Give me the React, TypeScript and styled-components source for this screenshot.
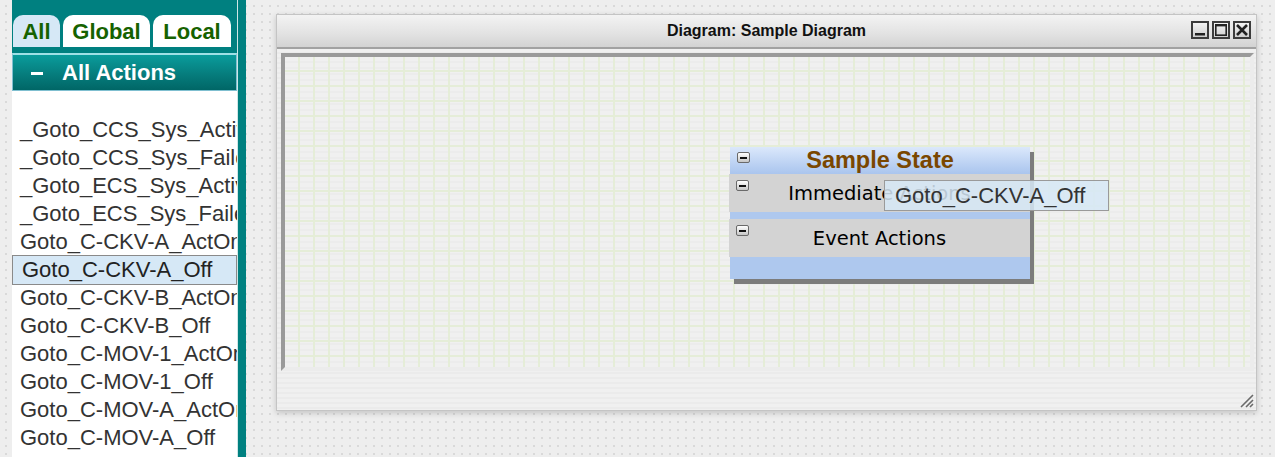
import React from "react";
import styled, { createGlobalStyle } from "styled-components";

const GlobalStyle = createGlobalStyle`
  html, body { margin: 0; padding: 0; }
  body {
    font-family: "Liberation Sans", Arial, sans-serif;
    background: #eeeeee;
  }
`;

const Page = styled.div`
  display: flex;
  align-items: stretch;
  width: 1275px;
  height: 457px;
  overflow: hidden;
  background-color: #eeeeee;
  background-image: radial-gradient(circle, #d9d9d9 0.9px, transparent 1.3px);
  background-size: 8px 8px;
  background-position: 2px 2px;
`;

const Sidebar = styled.aside`
  margin-left: 12px;
  width: 225px;
  flex: none;
  display: flex;
  flex-direction: column;
  background: #008080;
  border-right: 1px solid #cfe6e6;
  box-shadow: 8px 0 0 #008080;
  padding-top: 15px;
`;

const Tabs = styled.div`
  display: flex;
  gap: 3px;
  padding-left: 1px;
  height: 32px;
`;

const Tab = styled.div<{ $active?: boolean; $w: number }>`
  width: ${(p) => p.$w}px;
  height: 32px;
  border-radius: 10px 10px 0 0;
  background: ${(p) => (p.$active ? "#d6e8f6" : "#ffffff")};
  color: #166200;
  font-weight: bold;
  font-size: 22px;
  display: flex;
  align-items: center;
  justify-content: center;
  padding-top: 1px;
  box-sizing: border-box;
`;

const SectionHeader = styled.div`
  margin-top: 6px;
  height: 38px;
  box-sizing: border-box;
  border: 1px solid #7fbfd0;
  border-top: 2px solid #9fe0e6;
  background: linear-gradient(#0a9c9c, #067d7d 55%, #006666);
  display: flex;
  align-items: center;
  gap: 19px;
  padding-left: 18px;
  color: #ffffff;
  font-weight: bold;
  font-size: 22px;
`;

const Dash = styled.span`
  display: inline-block;
  width: 12px;
  height: 3px;
  background: #ffffff;
  margin-top: 2px;
`;

const ActionList = styled.ul`
  list-style: none;
  margin: 0;
  padding: 25px 0 0 0;
  flex: 1;
  background: #ffffff;
  overflow: hidden;
`;

const ActionItem = styled.li<{ $selected?: boolean }>`
  height: 28px;
  line-height: 28px;
  font-size: 22px;
  color: #333333;
  white-space: nowrap;
  overflow: hidden;
  padding-left: 8px;
  box-sizing: content-box;
  ${(p) =>
    p.$selected &&
    `
    background: #d6e8f6;
    border: 1px solid #8a8a8a;
    margin: -1px 0;
    padding-left: 9px;
    color: #222;
  `}
`;

const Workspace = styled.main`
  flex: 1;
  padding: 14px 0 0 38px;
`;

const Window = styled.section`
  width: 981px;
  height: 397px;
  box-sizing: border-box;
  border: 1px solid #c4c4c4;
  background: #efefef;
  display: flex;
  flex-direction: column;
  position: relative;
  box-shadow: 0 2px 6px rgba(0, 0, 0, 0.18);
`;

const TitleBar = styled.header`
  height: 32px;
  flex: none;
  background: linear-gradient(#f3f3f3, #e2e2e2 60%, #d3d3d3);
  border-bottom: 2px solid #a2a2a2;
  display: flex;
  align-items: center;
  justify-content: center;
  position: relative;
  font-weight: bold;
  font-size: 16px;
  color: #111111;
`;

const WinButtons = styled.div`
  position: absolute;
  right: 5px;
  top: 6px;
  display: flex;
  gap: 3px;
`;

const WinButton = styled.div`
  width: 18px;
  height: 18px;
  box-sizing: border-box;
  border: 2px solid #3c3c3c;
  background: linear-gradient(#f4f4f4, #cfcfcf);
  display: flex;
  align-items: center;
  justify-content: center;
`;

const WindowBody = styled.div`
  flex: 1;
  padding: 4px 2px 0 4px;
  display: flex;
  flex-direction: column;
  background: repeating-linear-gradient(#f0f0f0 0 3px, #ebebeb 3px 5px);
`;

const Canvas = styled.div`
  height: 318px;
  box-sizing: border-box;
  border-style: solid;
  border-width: 4px;
  border-color: #9a9a9a #ececec #ececec #9a9a9a;
  position: relative;
  background-color: #eeeeee;
  background-image: linear-gradient(90deg, #e5edd8 2px, transparent 2px),
    linear-gradient(#e5edd8 2px, transparent 2px),
    repeating-linear-gradient(#f0f0f0 0 4px, #ececec 4px 6px);
  background-size: 15px 15px, 15px 15px, auto;
  background-position: 13px 13px, 13px 13px, 0 0;
`;

const StateNode = styled.div`
  position: absolute;
  width: 300px;
  display: flex;
  flex-direction: column;
  background: #aec8ee;
  box-shadow: 4px 5px 0 #7c7c7c;
`;

const NodeHeader = styled.div`
  height: 27px;
  position: relative;
  background: linear-gradient(#dbe8fb, #b8cff2 70%, #aac5ee);
  display: flex;
  align-items: center;
  justify-content: center;
  color: #7a4700;
  font-weight: bold;
  font-size: 23.5px;
`;

const NodeRow = styled.div`
  height: 38px;
  position: relative;
  background: #d3d3d3;
  display: flex;
  align-items: center;
  justify-content: center;
  font-family: "DejaVu Sans", Verdana, sans-serif;
  font-size: 19.5px;
  color: #000000;
  margin-left: -1px;
`;

const RowGap = styled.div<{ $h: number }>`
  height: ${(p) => p.$h}px;
`;

const Collapse = styled.span<{ $top: number }>`
  position: absolute;
  left: 7px;
  top: ${(p) => p.$top}px;
  width: 13px;
  height: 11px;
  box-sizing: border-box;
  border: 1px solid #6a6a6a;
  border-radius: 2px;
  background: linear-gradient(#ffffff, #c6c6c6);
  display: flex;
  align-items: center;
  justify-content: center;
  &::after {
    content: "";
    width: 7px;
    height: 2px;
    background: #111;
  }
`;

const DragGhost = styled.div`
  position: absolute;
  width: 225px;
  height: 31px;
  box-sizing: border-box;
  border: 1px solid #9a9a9a;
  background: rgba(214, 232, 246, 0.86);
  padding-left: 10px;
  font-size: 22px;
  line-height: 29px;
  color: #333333;
  white-space: nowrap;
`;

const Grip = styled.svg`
  position: absolute;
  right: 2px;
  bottom: 2px;
`;

const actions = [
  "_Goto_CCS_Sys_Active",
  "_Goto_CCS_Sys_Failed",
  "_Goto_ECS_Sys_Active",
  "_Goto_ECS_Sys_Failed",
  "Goto_C-CKV-A_ActOn",
  "Goto_C-CKV-A_Off",
  "Goto_C-CKV-B_ActOn",
  "Goto_C-CKV-B_Off",
  "Goto_C-MOV-1_ActOn",
  "Goto_C-MOV-1_Off",
  "Goto_C-MOV-A_ActOn",
  "Goto_C-MOV-A_Off",
];

export default function App() {
  return (
    <>
      <GlobalStyle />
      <Page>
        <Sidebar>
          <Tabs>
            <Tab $active $w={47}>All</Tab>
            <Tab $w={87}>Global</Tab>
            <Tab $w={78}>Local</Tab>
          </Tabs>
          <SectionHeader>
            <Dash />
            <span>All Actions</span>
          </SectionHeader>
          <ActionList>
            {actions.map((a) => (
              <ActionItem key={a} $selected={a === "Goto_C-CKV-A_Off"}>
                {a}
              </ActionItem>
            ))}
          </ActionList>
        </Sidebar>
        <Workspace>
          <Window>
            <TitleBar>
              Diagram: Sample Diagram
              <WinButtons>
                <WinButton>
                  <svg width="14" height="14" viewBox="0 0 14 14">
                    <rect x="2" y="10" width="10" height="2.5" fill="#222" />
                  </svg>
                </WinButton>
                <WinButton>
                  <svg width="14" height="14" viewBox="0 0 14 14">
                    <rect x="1.8" y="1.8" width="10.4" height="10.4" fill="none" stroke="#222" strokeWidth="1.6" />
                    <rect x="1.8" y="1" width="10.4" height="2.4" fill="#222" />
                  </svg>
                </WinButton>
                <WinButton>
                  <svg width="14" height="14" viewBox="0 0 14 14">
                    <path d="M2 2 L12 12 M12 2 L2 12" stroke="#222" strokeWidth="2.6" />
                  </svg>
                </WinButton>
              </WinButtons>
            </TitleBar>
            <WindowBody>
              <Canvas>
                <StateNode style={{ left: 445, top: 90 }}>
                  <NodeHeader>
                    <Collapse $top={5} />
                    Sample State
                  </NodeHeader>
                  <NodeRow>
                    <Collapse $top={6} />
                    Immediate Actions
                  </NodeRow>
                  <RowGap $h={7} />
                  <NodeRow>
                    <Collapse $top={6} />
                    Event Actions
                  </NodeRow>
                  <RowGap $h={22} />
                </StateNode>
                <DragGhost style={{ left: 599, top: 123 }}>Goto_C-CKV-A_Off</DragGhost>
              </Canvas>
            </WindowBody>
            <Grip width="16" height="16" viewBox="0 0 16 16">
              <path d="M15 3 L3 15 M15 8 L8 15 M15 12 L12 15" stroke="#6a6a6a" strokeWidth="1.6" />
            </Grip>
          </Window>
        </Workspace>
      </Page>
    </>
  );
}
